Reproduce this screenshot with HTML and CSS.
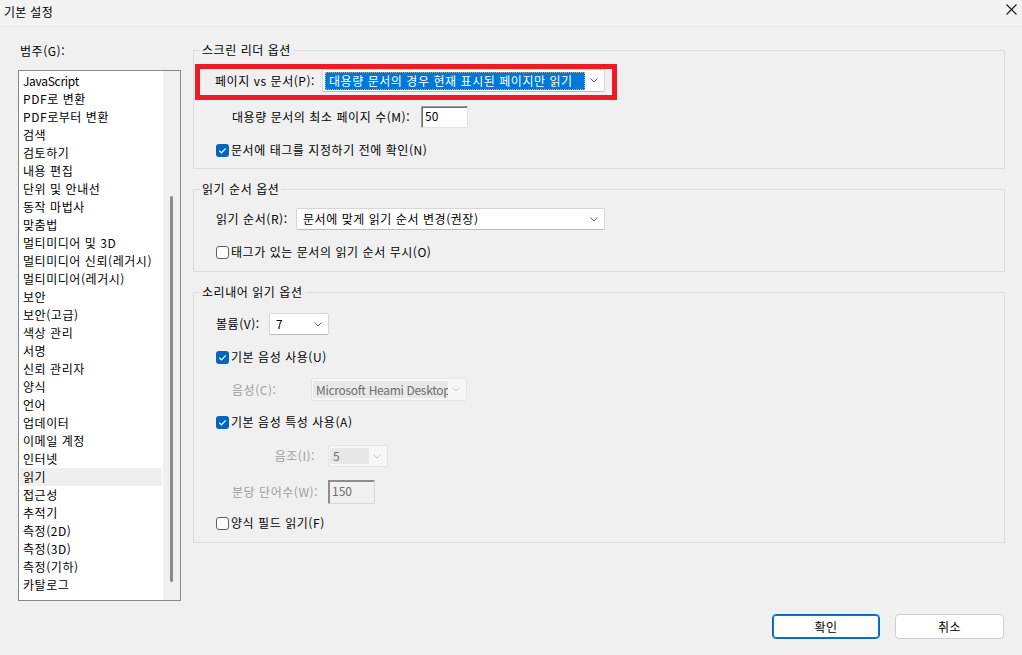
FILE: index.html
```html
<!DOCTYPE html>
<html lang="ko">
<head>
<meta charset="utf-8">
<title>기본 설정</title>
<link rel="stylesheet" href="styles.css">
</head>
<body>
<div class="window">
  <header class="titlebar">
    <span class="title">기본 설정</span>
    <svg class="close" width="11" height="11" viewBox="0 0 11 11"><path d="M0.5 0.5 L10.5 10.5 M10.5 0.5 L0.5 10.5" stroke="#1b1b1b" stroke-width="1.1" fill="none"/></svg>
  </header>

  <main class="main">
    <aside class="categories">
      <div class="cat-label">범주(G):</div>
      <div class="listbox">
        <ul class="list">
          <li class="latin">JavaScript</li>
          <li>PDF로 변환</li>
          <li>PDF로부터 변환</li>
          <li>검색</li>
          <li>검토하기</li>
          <li>내용 편집</li>
          <li>단위 및 안내선</li>
          <li>동작 마법사</li>
          <li>맞춤법</li>
          <li>멀티미디어 및 3D</li>
          <li>멀티미디어 신뢰(레거시)</li>
          <li>멀티미디어(레거시)</li>
          <li>보안</li>
          <li>보안(고급)</li>
          <li>색상 관리</li>
          <li>서명</li>
          <li>신뢰 관리자</li>
          <li>양식</li>
          <li>언어</li>
          <li>업데이터</li>
          <li>이메일 계정</li>
          <li>인터넷</li>
          <li class="selected">읽기</li>
          <li>접근성</li>
          <li>추적기</li>
          <li>측정(2D)</li>
          <li>측정(3D)</li>
          <li>측정(기하)</li>
          <li>카탈로그</li>
        </ul>
        <div class="scrollbar"><div class="thumb"></div></div>
      </div>
    </aside>

    <section class="panel">
      <div class="group g1">
        <div class="group-title">스크린 리더 옵션</div>
        <div class="highlight">
          <span class="lbl lbl-page">페이지 vs 문서(P):</span>
          <div class="combo combo-page">
            <span class="sel-text">대용량 문서의 경우 현재 표시된 페이지만 읽기</span>
            <svg class="chev" width="8" height="5" viewBox="0 0 8 5"><path d="M0.5 0.5 L4 4 L7.5 0.5" stroke="#5f5f5f" stroke-width="1" fill="none"/></svg>
          </div>
        </div>
        <div class="row row-min">
          <span class="lbl lbl-min">대용량 문서의 최소 페이지 수(M):</span>
          <div class="textbox tb-min">50</div>
        </div>
        <div class="row check-row r-g1check">
          <span class="cb checked"><svg width="13" height="13" viewBox="0 0 13 13"><path d="M3.3 6.7 L5.4 8.8 L9.8 4.3" stroke="#fff" stroke-width="1.2" fill="none"/></svg></span>
          <span class="cb-text">문서에 태그를 지정하기 전에 확인(N)</span>
        </div>
      </div>

      <div class="group g2">
        <div class="group-title">읽기 순서 옵션</div>
        <div class="row row-order">
          <span class="lbl lbl-order">읽기 순서(R):</span>
          <div class="combo combo-order">
            <span class="plain-text">문서에 맞게 읽기 순서 변경(권장)</span>
            <svg class="chev" width="8" height="5" viewBox="0 0 8 5"><path d="M0.5 0.5 L4 4 L7.5 0.5" stroke="#5f5f5f" stroke-width="1" fill="none"/></svg>
          </div>
        </div>
        <div class="row check-row r-g2check">
          <span class="cb"></span>
          <span class="cb-text">태그가 있는 문서의 읽기 순서 무시(O)</span>
        </div>
      </div>

      <div class="group g3">
        <div class="group-title">소리내어 읽기 옵션</div>
        <div class="row row-vol">
          <span class="lbl lbl-vol">볼륨(V):</span>
          <div class="combo combo-vol">
            <span class="plain-text">7</span>
            <svg class="chev" width="8" height="5" viewBox="0 0 8 5"><path d="M0.5 0.5 L4 4 L7.5 0.5" stroke="#5f5f5f" stroke-width="1" fill="none"/></svg>
          </div>
        </div>
        <div class="row check-row r-voice-check">
          <span class="cb checked"><svg width="13" height="13" viewBox="0 0 13 13"><path d="M3.3 6.7 L5.4 8.8 L9.8 4.3" stroke="#fff" stroke-width="1.2" fill="none"/></svg></span>
          <span class="cb-text">기본 음성 사용(U)</span>
        </div>
        <div class="row row-voice">
          <span class="lbl lbl-voice disabled">음성(C):</span>
          <div class="combo combo-voice is-disabled">
            <span class="dis-text dis-voice latin">Microsoft Heami Desktop</span>
            <svg class="chev" width="8" height="5" viewBox="0 0 8 5"><path d="M0.5 0.5 L4 4 L7.5 0.5" stroke="#c4c4c4" stroke-width="1" fill="none"/></svg>
          </div>
        </div>
        <div class="row check-row r-attr-check">
          <span class="cb checked"><svg width="13" height="13" viewBox="0 0 13 13"><path d="M3.3 6.7 L5.4 8.8 L9.8 4.3" stroke="#fff" stroke-width="1.2" fill="none"/></svg></span>
          <span class="cb-text">기본 음성 특성 사용(A)</span>
        </div>
        <div class="row row-pitch">
          <span class="lbl lbl-right disabled">음조(I):</span>
          <div class="combo combo-pitch is-disabled">
            <span class="dis-text dis-pitch">5</span>
            <svg class="chev" width="8" height="5" viewBox="0 0 8 5"><path d="M0.5 0.5 L4 4 L7.5 0.5" stroke="#c4c4c4" stroke-width="1" fill="none"/></svg>
          </div>
        </div>
        <div class="row row-words">
          <span class="lbl lbl-right disabled">분당 단어수(W):</span>
          <div class="textbox tb-words is-disabled">150</div>
        </div>
        <div class="row check-row r-form-check">
          <span class="cb"></span>
          <span class="cb-text">양식 필드 읽기(F)</span>
        </div>
      </div>
    </section>
  </main>

  <footer class="buttons">
    <button class="btn primary">확인</button>
    <button class="btn">취소</button>
  </footer>
</div>
</body>
</html>
```

FILE: styles.css
```css
* { box-sizing: border-box; }

html, body {
  margin: 0;
  padding: 0;
}

body {
  width: 1022px;
  height: 655px;
  overflow: hidden;
  background: #f0f0f0;
  font-family: "Noto Sans CJK KR", "Noto Sans", sans-serif;
  font-size: 12px;
  letter-spacing: 0.55px;
  color: #000;
}

.latin {
  letter-spacing: -0.3px;
}

.window {
  display: flex;
  flex-direction: column;
  height: 655px;
}

/* title bar */
.titlebar {
  height: 25px;
  background: #f3f3f3;
  display: flex;
  align-items: center;
  padding: 0 5px 2px 4px;
}
.title {
  line-height: 16px;
  flex: 1;
  letter-spacing: 0.3px;
}
.close {
  margin-bottom: 4px;
}

/* main */
.main {
  display: flex;
  gap: 12px;
  padding-left: 18px;
}

.categories {
  width: 163px;
  display: flex;
  flex-direction: column;
}
.cat-label {
  margin-top: 18px;
  line-height: 16px;
  padding-left: 2px;
}
.listbox {
  margin-top: 11px;
  height: 531px;
  border: 1px solid #828790;
  display: flex;
  background: #fff;
}
.list {
  list-style: none;
  margin: 0;
  padding: 1px;
  flex: 1;
  min-width: 0;
}
.list li {
  height: 18px;
  line-height: 18px;
  padding-left: 3px;
  white-space: nowrap;
}
.list li.selected {
  background: #efefef;
}
.scrollbar {
  width: 17px;
  flex: none;
  background: #f0f0f0;
  display: flex;
  justify-content: center;
  padding-top: 125px;
}
.thumb {
  width: 3px;
  height: 386px;
  border-radius: 2px;
  background: #8a8a8a;
}

/* right panel */
.panel {
  width: 812px;
  display: flex;
  flex-direction: column;
  padding-top: 25px;
}

.group {
  border: 1px solid #dcdcdc;
}
.g2, .g3 {
  margin-top: 20px;
}
.g1 { padding-bottom: 8px; }
.g2 { padding-bottom: 9px; }
.g3 { padding-bottom: 9px; }

.group-title {
  margin: -9px 0 0 6px;
  padding: 0 2px;
  width: max-content;
  line-height: 16px;
  background: #f0f0f0;
}

.row {
  display: flex;
  align-items: center;
}

.lbl {
  line-height: 16px;
  white-space: nowrap;
}
.disabled {
  color: #9d9d9d;
}

/* red annotation frame */
.highlight {
  margin: 6px 0 0 1px;
  width: 422px;
  height: 36px;
  border: 5px solid #ed1c24;
  padding-left: 15px;
  display: flex;
  align-items: flex-start;
}
.lbl-page {
  width: 107px;
  line-height: 23px;
}

/* combo boxes */
.combo {
  display: flex;
  align-items: center;
  background: #fff;
  border: 1px solid #d6d6d6;
  border-bottom-color: #bcbcbc;
  border-radius: 2px;
  padding: 0 6px 0 2px;
}
.chev {
  margin-left: auto;
  flex: none;
}
.combo-page {
  width: 283px;
  height: 23px;
}
.sel-text {
  background: #0078d7;
  color: #fff;
  width: 260px;
  height: 18px;
  line-height: 16px;
  padding-left: 3px;
  border: 1px dotted #f0a040;
  white-space: nowrap;
  overflow: hidden;
}
.plain-text {
  padding-left: 4px;
  line-height: 16px;
  white-space: nowrap;
}

/* text boxes */
.textbox {
  background: #fff;
  border: 1px solid;
  border-color: #9a9a9a #e3e3e3 #e3e3e3 #9a9a9a;
  box-shadow: inset 1px 1px 0 #6e6e6e;
  padding-left: 3px;
  line-height: 18px;
  letter-spacing: 0;
}

.row-min {
  margin-top: 6px;
  height: 22px;
  padding-left: 38px;
}
.lbl-min { width: 189px; }
.tb-min { width: 47px; height: 22px; }

/* checkboxes */
.check-row {
  height: 20px;
  padding-left: 22px;
}
.cb {
  width: 13px;
  height: 13px;
  border: 1px solid #616161;
  border-radius: 3px;
  background: #fdfdfd;
  margin-right: 2px;
  flex: none;
  display: flex;
}
.cb.checked {
  border: none;
  background: #0067c0;
}
.cb-text {
  line-height: 16px;
  white-space: nowrap;
}
.r-g1check { margin-top: 12px; }

/* group 2 */
.row-order {
  margin-top: 11px;
  height: 22px;
  padding-left: 22px;
}
.lbl-order { width: 80px; }
.combo-order { width: 309px; height: 22px; }
.r-g2check { margin-top: 12px; }

/* group 3 */
.row-vol {
  margin-top: 13px;
  height: 22px;
  padding-left: 22px;
}
.lbl-vol { width: 53px; }
.combo-vol { width: 60px; height: 22px; }
.r-voice-check { margin-top: 12px; }

.row-voice {
  margin-top: 11px;
  height: 23px;
  padding-left: 38px;
}
.lbl-voice { width: 79px; }

.combo.is-disabled {
  background: #f7f7f7;
  border: 1px solid #e4e4e4;
  padding: 2px 6px 2px 1px;
  align-items: stretch;
}
.combo.is-disabled .chev {
  align-self: center;
}
.dis-text {
  background: #e8e8e8;
  color: #6d6d6d;
  padding-left: 3px;
  line-height: 17px;
  white-space: nowrap;
  overflow: hidden;
}
.combo-voice { width: 156px; height: 23px; }
.dis-voice { width: 135px; flex: none; }

.r-attr-check { margin-top: 11px; }

.row-pitch {
  margin-top: 13px;
  height: 22px;
  padding-left: 38px;
}
.lbl-right {
  width: 96px;
  text-align: right;
  padding-right: 13px;
}
.combo-pitch { width: 60px; height: 22px; }
.dis-pitch { width: 39px; line-height: 16px; }

.row-words {
  margin-top: 13px;
  height: 24px;
  padding-left: 38px;
}
.tb-words {
  width: 47px;
  height: 24px;
  line-height: 20px;
}
.textbox.is-disabled {
  background: #f0f0f0;
  color: #6d6d6d;
  border-color: #8c8c8c #d8d8d8 #d8d8d8 #8c8c8c;
  box-shadow: inset 1px 1px 0 #8c8c8c;
}

.r-form-check { margin-top: 9px; }

/* footer buttons */
.buttons {
  display: flex;
  justify-content: flex-end;
  gap: 15px;
  padding: 13px 18px 0 0;
}
.btn {
  height: 25px;
  width: 109px;
  background: #fff;
  border: 1px solid #cfcfcf;
  border-radius: 4px;
  font-family: "Noto Sans CJK KR", "Noto Sans", sans-serif;
  font-size: 12px;
  letter-spacing: 0.5px;
  color: #000;
  padding: 0;
}
.btn.primary {
  width: 108px;
  border: 1px solid #0067c0;
  box-shadow: inset 0 0 0 1px #0078d4;
}
```
